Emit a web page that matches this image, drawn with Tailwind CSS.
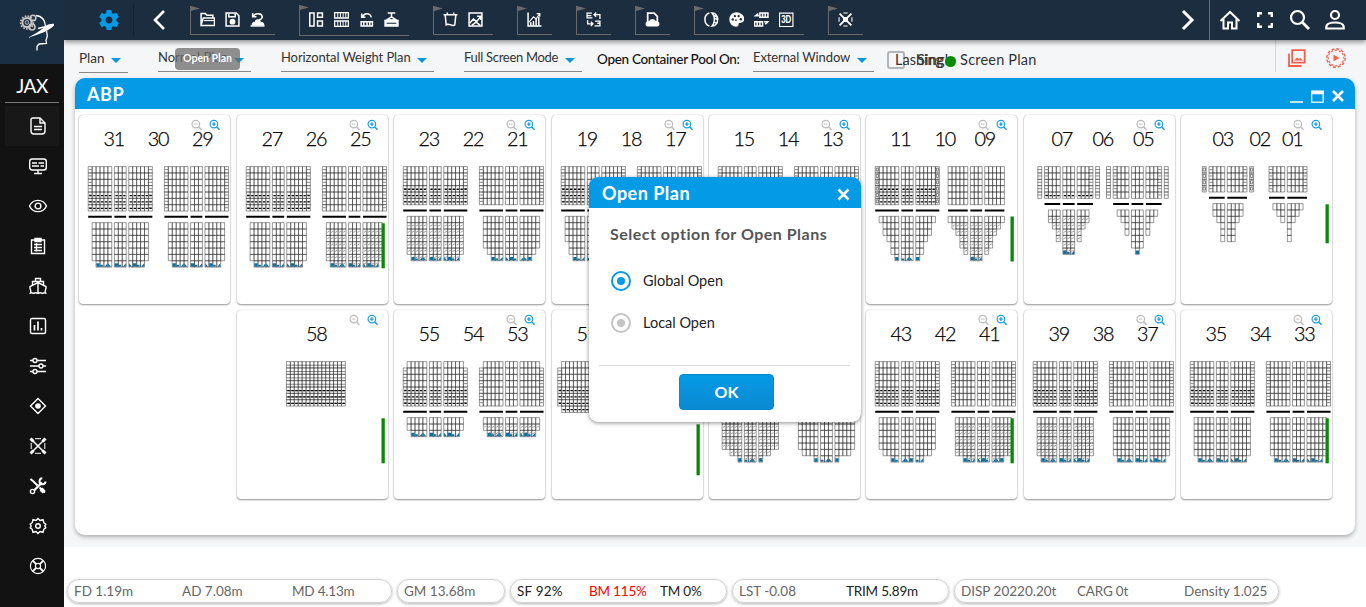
<!DOCTYPE html>
<html lang="en">
<head>
<meta charset="utf-8">
<title>Stowage planner</title>
<script src="https://cdn.jsdelivr.net/npm/@tailwindcss/browser@4"></script>
</head>
<body class="w-[1366px] h-[607px] overflow-hidden bg-white font-['Lato','Open_Sans',sans-serif] text-[14px] text-[#222]">
<div class="relative flex w-[1366px] h-[607px]">

  <!-- Sidebar -->
  <aside class="w-16 shrink-0 bg-[#121212] flex flex-col relative z-20">
    <div class="h-16 bg-[#1b2f43] flex items-center justify-center">
      <svg width="44" height="44" viewBox="0 0 44 44" fill="none" stroke="#fff">
        <g stroke="#c9c6c4"><circle cx="17" cy="12.500" r="4.600" stroke-width="2"/><circle cx="17" cy="12.500" r="6.400" stroke-width="1.600" stroke-dasharray="1.700 1.300"/><circle cx="17" cy="12.500" r="1.800"/><circle cx="23" cy="8" r="2.800" stroke-width="1.600"/><circle cx="22" cy="17" r="3" stroke-width="1.600"/></g>
        <path d="M26 5.500c5 .5 9 4 9.500 10.500M36.500 20.500l.8 5.500-1.300 4.500.5 3-7.500.5-2 2.500v4" stroke-width="1.300"/>
        <path d="M17 28C26 24 32 19 38 14.500L46 13C42 19.500 33 23.500 17 28Z" fill="#fff" stroke="none"/>
        <path d="M28 18.500l10-2.500" stroke-width="1.500"/>
      </svg>
    </div>
    <div class="mx-[5px] h-[39px] border-b border-[#777] flex items-center justify-center text-white text-[19px] pt-1.5 tracking-[-0.5px]">JAX</div>
    <nav class="flex flex-col pt-[3px]" id="nav"></nav>
  </aside>

  <div class="flex flex-col w-[1302px]">
    <!-- Application bar -->
    <header class="h-10 bg-[#1c2d3f] flex items-center relative z-10 shadow-[0_2px_5px_rgba(0,0,0,0.45)] text-white">
      <div class="w-[70px] h-8 border-r border-[#17222e] flex items-center pl-[35px]">
        <svg width="20" height="20" viewBox="2 2 20 20" fill="#059ae6"><path d="M19.430 12.980c.04-.32.07-.64.07-.98s-.03-.66-.07-.98l2.110-1.650c.19-.15.24-.42.12-.64l-2-3.460c-.12-.22-.39-.3-.61-.22l-2.490 1c-.52-.4-1.080-.73-1.690-.98l-.38-2.650C14.460 2.180 14.250 2 14 2h-4c-.25 0-.46.18-.49.42l-.38 2.650c-.61.25-1.170.59-1.690.98l-2.490-1c-.23-.09-.49 0-.61.22l-2 3.460c-.13.22-.07.49.12.64l2.110 1.650c-.04.32-.07.65-.07.98s.03.66.07.98l-2.110 1.650c-.19.15-.24.42-.12.64l2 3.460c.12.22.39.3.61.22l2.490-1c.52.4 1.080.73 1.690.98l.38 2.650c.03.24.24.42.49.42h4c.25 0 .46-.18.49-.42l.38-2.650c.61-.25 1.170-.59 1.690-.98l2.490 1c.23.09.49 0 .61-.22l2-3.460c.12-.22.07-.49-.12-.64l-2.110-1.650zM12 15.500c-1.930 0-3.500-1.570-3.500-3.500s1.570-3.500 3.500-3.500 3.500 1.570 3.500 3.500-1.570 3.500-3.500 3.500z"/></svg>
      </div>
      <svg class="ml-[18px] shrink-0" width="14" height="22" viewBox="0 0 14 22" fill="none" stroke="#fff" stroke-width="2.600"><path d="M12 2 3 11l9 9"/></svg>
      <div id="tools" class="flex gap-6 ml-6 w-[992px]"></div>
      <svg class="shrink-0 -ml-px" width="14" height="22" viewBox="0 0 14 22" fill="none" stroke="#fff" stroke-width="3"><path d="m2 2 9 9-9 9"/></svg>
      <div class="ml-[14px] h-10 border-l border-[#66717c] flex items-center gap-[11px] pl-[8px]">
        <svg width="24" height="24" viewBox="0 0 24 24" fill="none" stroke="#fff" stroke-width="2"><path d="M2.500 13 12 4l9.500 9M5.500 11v9.500h4.500v-6h4v6h4.500V11"/></svg>
        <svg width="24" height="24" viewBox="0 0 24 24" fill="none" stroke="#fff" stroke-width="2.400"><path d="M5.200 9V5.200H9M15 5.200h3.800V9M18.800 15v3.800H15M9 18.800H5.200V15"/></svg>
        <svg width="24" height="24" viewBox="0 0 24 24" fill="none" stroke="#fff" stroke-width="2.200"><circle cx="9.500" cy="9.500" r="6.500"/><path d="m14.500 14.500 6.500 6.500" stroke-width="2.800"/></svg>
        <svg width="24" height="24" viewBox="0 0 24 24" fill="none" stroke="#fff" stroke-width="2.200"><circle cx="12" cy="7" r="4"/><path d="M3.300 20.500v-1.500c0-2.800 4-4.500 8.700-4.500s8.700 1.700 8.700 4.500v1.500z"/></svg>
      </div>
    </header>

    <main class="h-[507px] bg-[#f5f6f8] flex flex-col">
      <!-- Option row -->
      <div class="h-[38px] flex items-start pl-[15px] pr-2 text-[#333] whitespace-nowrap">
        <div class="w-[49px] h-[33px] border-b border-[#888] flex items-center text-[13.5px] pt-[5px]">Plan<svg class="ml-auto mr-[7px] mt-[3px] shrink-0" width="10" height="5"><path d="M0 0h10L5 5z" fill="#0896de"/></svg></div>
        <div class="ml-[30px] w-[93px] h-8 border-b border-[#888] flex items-center pt-[5px] text-[13px]">Normal Plan<svg class="ml-auto mr-[7px] mt-[4px] shrink-0" width="10" height="5"><path d="M0 0h10L5 5z" fill="#0896de"/></svg></div>
        <div class="ml-[30px] w-[153px] h-8 border-b border-[#888] flex items-center pt-[5px] text-[13px] tracking-[-0.1px]">Horizontal Weight Plan<svg class="ml-auto mr-[7px] mt-[4px] shrink-0" width="10" height="5"><path d="M0 0h10L5 5z" fill="#0896de"/></svg></div>
        <div class="ml-[30px] w-[118px] h-8 border-b border-[#888] flex items-center pt-[5px] text-[13px] tracking-[-0.3px]">Full Screen Mode<svg class="ml-auto mr-[7px] mt-[4px] shrink-0" width="10" height="5"><path d="M0 0h10L5 5z" fill="#0896de"/></svg></div>
        <div class="ml-[15px] w-[156px] h-8 flex items-center pt-[6px] text-[13.5px] tracking-[-0.3px] font-medium text-[#111]">Open Container Pool On:</div>
        <div class="w-[121px] h-8 border-b border-[#888] flex items-center pt-[5px] text-[13px] tracking-[-0.1px]">External Window<svg class="ml-auto mr-[7px] mt-[4px] shrink-0" width="10" height="5"><path d="M0 0h10L5 5z" fill="#0896de"/></svg></div>
        <div class="ml-[13px] mt-[11px] w-[18px] h-[18px] border-2 border-[#b4b4b4] rounded-[3px]"></div>
        <div class="relative mt-[9px] -ml-[10px] w-[160px] h-6 text-[14.500px] leading-[22px]">Lashing<span class="absolute left-[22px] top-0 tracking-[0.2px]">Single Screen Plan</span><span class="absolute left-[50px] top-[7px] w-[11px] h-[11px] rounded-full bg-[#0a8a0a]"></span></div>
        <div class="ml-auto h-8 border-l border-[#d5d6d8] flex items-center gap-5 pl-3 pr-[12px] pt-1">
          <svg width="18" height="18" viewBox="0 0 18 18" fill="none" stroke="#f3604f" stroke-width="1.800"><path d="M4.200 1.200h12.500v12.500H4.200zM1 4.500V17h12.500"/><path d="m6 11.500 3-3 2 1.500 1.500-1 2.500 2.500z" fill="#f3604f" stroke="none"/></svg>
          <svg width="20" height="20" viewBox="0 0 20 20" fill="none" stroke="#f3604f" stroke-width="1.100"><circle cx="10" cy="10" r="7.800" stroke-dasharray="2.450 1.634" stroke-dashoffset="-2.450"/><circle cx="10" cy="10" r="9.200" stroke-width="1.400" stroke-dasharray="2.890 1.927"/><path d="m7.500 6.800 6 3.200-6 3.200z" fill="#f3604f" stroke="none"/></svg>
        </div>
      </div>

      <!-- Bay plan window -->
      <section class="ml-[11px] w-[1280px] h-[457px] bg-white rounded-[10px] overflow-hidden shadow-[0_2px_4px_rgba(0,0,0,0.3)]">
        <div class="h-[31px] bg-[#059ae6] flex items-center pl-3 text-white">
          <span class="text-[18px] font-bold tracking-[0.6px] pt-[2px]">ABP</span>
          <svg class="ml-auto mr-[9px] mt-1" width="56" height="16" viewBox="0 0 56 16" fill="none" stroke="#fff"><path d="M0 14h13" stroke-width="1.600"/><rect x="21.700" y="3.200" width="11.500" height="11" stroke-width="1.200"/><path d="M21 4.500h13" stroke-width="3.600"/><path d="m43 3 10 10M53 3 43 13" stroke-width="2.600"/></svg>
        </div>
        <div id="bays" class="mt-[5.500px] ml-[4.400px] grid grid-cols-[repeat(8,151px)] auto-rows-[189.500px] gap-x-[6.400px] gap-y-[5.500px]"></div>
      </section>
    </main>

    <!-- Stability figures -->
    <footer class="h-[60px] bg-white flex pt-[32px] pl-[3px] gap-[5px] text-[#666] text-[13.5px] whitespace-nowrap">
      <div class="w-[325px] h-6 rounded-full border border-[#d2d2d2] shadow-[0_1px_3px_rgba(0,0,0,0.3)] flex items-center pl-1.5 pt-px"><span class="w-[108px]">FD 1.19m</span><span class="w-[110px]">AD 7.08m</span><span class="tracking-[-0.2px]">MD 4.13m</span></div>
      <div class="w-[108px] h-6 rounded-full border border-[#d2d2d2] shadow-[0_1px_3px_rgba(0,0,0,0.3)] flex items-center pl-1.5 pt-px">GM 13.68m</div>
      <div class="w-[217px] h-6 rounded-full border border-[#d2d2d2] shadow-[0_1px_3px_rgba(0,0,0,0.3)] flex items-center pl-1.5 pt-px text-[#222]"><span class="w-[72px] tracking-[0.2px]">SF 92%</span><span class="w-[71px] text-[#f00] tracking-[-0.2px]">BM 115%</span><span class="tracking-[-0.2px]">TM 0%</span></div>
      <div class="w-[217px] h-6 rounded-full border border-[#d2d2d2] shadow-[0_1px_3px_rgba(0,0,0,0.3)] flex items-center pl-1.5 pt-px"><span class="w-[107px]">LST -0.08</span><span class="text-[#222] tracking-[-0.2px]">TRIM 5.89m</span></div>
      <div class="w-[325px] h-6 rounded-full border border-[#d2d2d2] shadow-[0_1px_3px_rgba(0,0,0,0.3)] flex items-center pl-1.5 pt-px"><span class="w-[116px]">DISP 20220.20t</span><span class="w-[107px] tracking-[-0.2px]">CARG 0t</span><span>Density 1.025</span></div>
    </footer>
  </div>

  <!-- Tooltip -->
  <div class="absolute z-30 left-[175px] top-[48px] w-[65px] h-[22px] rounded bg-[#6b6b6b]/75 text-white text-[10.500px] font-bold flex items-center justify-center whitespace-nowrap">Open Plan</div>

  <!-- Open plan dialog -->
  <div class="absolute z-30 left-[589px] top-[177px] w-[272px] h-[245px] rounded-[9px] bg-white overflow-hidden shadow-[0_1px_4px_rgba(0,0,0,0.45)] flex flex-col">
    <div class="h-[31px] bg-[#059ae6] flex items-center justify-between pl-[13px] pr-[11px] text-white text-[18px] font-bold tracking-[0.5px]"><span class="pt-[2px]">Open Plan</span><svg class="mt-1" width="13" height="13" viewBox="0 0 13 13" stroke="#fff" stroke-width="2.500"><path d="m1.500 1.500 10 10M11.500 1.500l-10 10"/></svg></div>
    <div class="pl-[21px] pt-[14px] text-[16px] leading-6 font-bold text-[#555] tracking-[0.5px] whitespace-nowrap">Select option for Open Plans</div>
    <div class="flex items-center gap-3 pl-[22px] mt-[25px] h-[20px] text-[14.500px]"><span class="w-5 h-5 rounded-full border-2 border-[#059ae6] flex items-center justify-center"><span class="w-2 h-2 rounded-full bg-[#059ae6]"></span></span><span>Global Open</span></div>
    <div class="flex items-center gap-3 pl-[22px] mt-[22px] h-[20px] text-[14.500px]"><span class="w-5 h-5 rounded-full border-2 border-[#c4c4c4] flex items-center justify-center"><span class="w-2 h-2 rounded-full bg-[#c4c4c4]"></span></span><span>Local Open</span></div>
    <div class="ml-[10px] mr-[11px] mt-[32px] border-t border-[#dadada] pt-2 pl-[4px] flex justify-center"><button class="w-[95px] h-9 rounded-[4px] border border-[#0789cd] bg-gradient-to-b from-[#059ae6] to-[#0a8ad0] text-white font-bold text-[16px]">OK</button></div>
  </div>
</div>

<script>
// Side navigation icons, 20px each
const nav = [
  '<path d="M5 2h7l5 5v8a3 3 0 0 1-3 3H6a3 3 0 0 1-3-3V4a2 2 0 0 1 2-2z"/><path d="M12 2v5h5M6 10.500h8M6 13.500h8"/>',
  '<rect x="1.700" y="3" width="16.600" height="11" rx="2.500"/><path d="M4 7h5M10.500 7H16M4 10h7M12.500 10H16M10 14v3.300M6 17.500h8"/>',
  '<path d="M1.500 10C5 2.500 15 2.500 18.500 10 15 17.500 5 17.500 1.500 10z"/><circle cx="10" cy="10" r="2.900"/>',
  '<path d="M3.500 4h13v13.500h-13z"/><path d="M7 2.500h6v3H7z" fill="#fff"/><path d="M6 8.500h8M6 11.500h8M6 14.500h8M8.500 7v8.500"/>',
  '<path d="M3 17c0-3-1.500-5-1-6.500L10 6.500l8 4c.5 1.500-1 3.500-1 6.500M4.500 9V5.500h11V9M7.500 5.500V2.500h5v3M10 6.500V17M1.500 17.500q2-1.500 4 0 2.200-1.500 4.500 0 2.300-1.500 4.500 0 2-1.500 4 0"/>',
  '<rect x="2.500" y="2.500" width="15" height="15" rx="1.500"/><path d="M6.500 14.500V9M10 14.500v-9M13.500 14.500V12" stroke-width="1.700"/>',
  '<path d="M2 4.500h3M9 4.500h9M2 10h9M15 10h3M2 15.500h3M9 15.500h9"/><circle cx="7" cy="4.500" r="2"/><circle cx="13" cy="10" r="2"/><circle cx="7" cy="15.500" r="2"/>',
  '<path d="m10 2.500 7.500 7.500-7.500 7.500L2.500 10z"/><circle cx="10" cy="10" r="2.800" fill="#fff" stroke="none"/>',
  '<path d="m4 4 12 12M16 4 4 16" stroke-width="1.500"/><path d="M7 2.700h6M7 17.300h6M3.200 7v6M16.800 7v6" stroke-width="1"/><path d="m2.500 2.500 3 3M17.500 2.500l-3 3M2.500 17.500l3-3M17.500 17.500l-3-3" stroke-width="3"/>',
  '<path d="m2.500 3 3 2.500 4 4M11.500 11.500l5.500 5" stroke-width="2"/><path d="m13 13 3 3" stroke-width="4"/><path d="m6 14.500 8-8" stroke-width="2.300"/><circle cx="4.500" cy="15.500" r="2.100"/><path d="M17.500 5.500a3 3 0 1 1-3.200-3.200" stroke-width="2"/>',
  '<path d="M10 2.500 12 4.500l3-.8.800 3 2 1.500-1 1.800 1 1.800-2 1.500-.8 3-3-.8-2 2-2-2-3 .8-.8-3-2-1.500 1-1.800-1-1.800 2-1.500.8-3 3 .8z"/><circle cx="10" cy="10" r="2.300"/>',
  '<circle cx="10" cy="10" r="7.600" stroke-width="1.100"/><circle cx="10" cy="10" r="2.600" stroke-width="1.100"/><path d="m4.700 4.700 3.500 3.500M15.300 4.700l-3.500 3.500M4.700 15.300l3.500-3.500M15.300 15.300l-3.500-3.500" stroke-width="1.900"/>'
];
document.getElementById('nav').innerHTML = nav.map((p, i) =>
  `<a class="mx-[5px] h-10 flex items-center justify-center pl-[12px] ${i ? '' : 'bg-[#181818]'}"><svg width="20" height="20" viewBox="0 0 20 20" fill="none" stroke="#fff" stroke-width="1.400">${p}</svg></a>`).join('');

// Toolbar groups, 15px icons
const cont = (x, y) => `<path d="M${x} ${y}h13v5h-13z"/><path d="M${x + 3} ${y}v5M${x + 5.500} ${y}v5M${x + 8} ${y}v5M${x + 10.500} ${y}v5" stroke-width=".9"/>`;
const tools = [
  ['<path d="M1.500 13V2h4l1.500 1.500h5.500V6M1.500 13l2-7h10.500v7z"/><path d="M4 8.500h10" stroke-width="1"/>',
   '<path d="M1.500 1.500h9.500l2.500 2.500v9.500h-12z"/><path d="M4 2v3h6V2"/><circle cx="7.500" cy="9.500" r="2" fill="#fff"/>',
   '<path d="M3.500 4.500c2-3.500 8-3 8.500.5 0 2-1.500 2.500-3 3M3 1.500V5h3.500" /><path d="M2 13h12c0-2.500-2-3.500-3.500-3.500-.5-3-5-3-5.500 0C3 9.500 2 11 2 13z" fill="#fff" stroke="none"/><path d="M1 13.500h13"/>'],
  ['<path d="M1.200 1.500h4v12h-4zM8.500 1.500h4.500v4H8.500zM8.500 9h4.500v4.500H8.500z"/>',
   cont(1, 1) + cont(1, 9),
   '<path d="M4 5c1-4 7-4 8 .5M3 2v3.500h3.500"/><path d="M2.500 9.500h10.500v4H2.500zM5 9v4M8 9v4M10.500 9v4"/>',
   '<path d="M4 1.500h7M7.500 2v3L3 8h9L7.500 5" /><path d="M1.500 8.500h12v5h-12z" fill="#fff"/><path d="M3 11h9" stroke="#1c2d3f" stroke-width="1"/>'],
  ['<path d="M1 3h13M2.500 3l1 9.500c2.500-2 5.500 2 8 0l1-9.500M4.500 1v2M10.500 1v2"/>',
   '<path d="M1.500 1.500h12v12h-12z"/><path d="m2 11 3.500-4 3 2.500 4-5M9 4.500h3.500V8M4 13l4-3 4 3"/>'],
  ['<path d="M1.500 1v12.500H14M4 13v-3M6.500 13V9M9 13V7M11.500 13V5"/><path d="m2.500 10 4-5 2.500 2L12 2.500M9.500 2h3v3" stroke-width="1"/>'],
  ['<g stroke-width="1.200"><path d="M6 1.500H1.500v4.500h5M1.500 3.800h4M8 3h5.500v4M10 1 8 3l2 2M9 9h4.500v4.500H8.500M7 11.500H2V8M5 9.500l2 2-2 2M11 11h3"/></g>'],
  ['<path d="M3 12V1.500h6l3 3V12" stroke-width="1.600"/><path d="M1 12c0-2 1.500-3 3.500-3 .8-2.500 5-2.500 6 0 2.500 0 3.500 1.500 3.500 3 0 1.500-1 2-2 2H3c-1.300 0-2-1-2-2z" fill="#fff" stroke="none"/>'],
  ['<path d="M5.500 1.500C0 3 0 12 5.500 13.500" /><path d="M8 1.500c7 0 7 12 0 12 3-3 3-9 0-12z"/><path d="m10 3.500 3 2M10.500 6.500l3 1M10 10l3 1"/>',
   '<path d="M7.500 1.500c-8 0-8 12 0 12 2 0 1-2 1.500-3s5 .5 5-3.500c0-3-3-5.500-6.500-5.500z" fill="#fff"/><g fill="#1c2d3f" stroke="none"><circle cx="4" cy="7.500" r="1.100"/><circle cx="6" cy="4.300" r="1.100"/><circle cx="9.500" cy="4.300" r="1.100"/><circle cx="11.500" cy="7.300" r="1.100"/><circle cx="7" cy="8" r=".8"/></g>',
   '<path d="M6 1.500h7.500v4H6zM8.500 1.500v4M11 1.500v4M1 9.500h7.500v4H1zM3.500 9.500v4M6 9.500v4M4.500 2 2 4h3M10 9.500h3.500L11 12"/>',
   '<path d="M1 1.500h12.500v12.500H1z" stroke-width="1.100"/><text x="7.300" y="11.200" text-anchor="middle" font-size="9.500" font-weight="bold" font-family="Liberation Sans" fill="#fff" stroke="none" textLength="9.500" lengthAdjust="spacingAndGlyphs">3D</text>'],
  ['<path d="m2 2 11 11M13 2 2 13" stroke-width="1.700"/><path d="M5.500 1.500h4M5.500 13.500h4M1.500 5.500v4M13.500 5.500v4" stroke-width="1"/><circle cx="7.500" cy="7.500" r="2.400" fill="#fff" stroke="none"/>']
];
document.getElementById('tools').innerHTML = tools.map((g, i) =>
  `<div class="relative flex items-center gap-[10px] pl-[9px] pr-[10px] border-l border-b border-[#6a6a6a] ${i === 1 ? 'h-[31px]' : 'h-[29px] mt-px'}"><svg class="absolute left-0 top-0" width="9" height="5"><path d="M0 0 9 2.500 0 5z" fill="#6a6a6a"/></svg>` +
  g.map(p => `<svg width="15" height="15" viewBox="0.5 0.5 14 14" fill="none" stroke="#fff" stroke-width="1.400">${p}</svg>`).join('') + '</div>').join('');

// Bay profiles: each block has an x origin, column groups, deck rows and hold row ranges
const W = 3.93, H = 6.35, GAP = 2.6, TOP = 52.3;
const rep = (r, n) => Array(n).fill(r);
const mir = (starts, last) => starts.map(s => [s, last - s]);
const F = [6, 3, 6];
const std = [...rep([1, 13], 6), [2, 12]];
const L = 9.2, R = 85.4, T3 = [35, 79.2, 123.5];
const bay = (names, left, right, green, tx = T3) => ({ names, blocks: [left, right].filter(Boolean), green, tx });
const blk = (x, rows, hold, o = {}) => ({ x, g: F, rows, hold, ...o });
const s23 = [...rep([1, 13], 5), [2, 12], [3, 11]];
const s19 = [...rep([1, 13], 4), [2, 12], [2, 12], [3, 11]];
const bays = [
  bay(['31', '30', '29'], blk(L, 7, std, { dots: 3 }), blk(R, 7, std)),
  bay(['27', '26', '25'], blk(L, 7, std, { dots: 3 }), blk(R, 7, std, { sh: 1 }), [109, 45]),
  bay(['23', '22', '21'], blk(L, 6, [...rep([1, 13], 6), [2, 12]], { dots: 3, sh: 1 }), blk(R, 6, s23)),
  bay(['19', '18', '17'], blk(L, 6, s19, { dots: 3 }), blk(R, 6, s19)),
  bay(['15', '14', '13'], blk(L, 6, s19, { dots: 3 }), blk(R, 6, s19)),
  bay(['11', '10', '09'], blk(L, 6, mir([1, 2, 2, 3, 4, 4, 5], 14), { dots: 3, box: 1 }), blk(82.100, 6, mir([0, 1, 2, 3, 3, 4, 5], 12), { g: [5, 3, 5], sh: 1, plain: 1 }), [102.200, 45], [34.5, 79, 119]),
  bay(['07', '06', '05'], blk(20.500, 5, mir([1, 1, 2, 3, 3, 4, 4], 10), { g: [4, 3, 4], wing: 1, dots: 1, sh: 1 }), blk(89.200, 5, mir([1, 2, 3, 3, 4, 4, 5], 10), { g: [4, 3, 4], wing: 1 }), null, [38, 79, 119.5]),
  bay(['03', '02', '01'], blk(28, 4, [[1, 7], [1, 7], [2, 6], [3, 5], [3, 5], [3, 5]], { g: [4, 5], wing: 2, nb: 1 }), blk(88, 4, [[1, 7], [2, 6], [3, 5], [4, 4], [4, 4], [4, 4]], { g: [4, 5], nb: 1 }), [90, 39], [42, 79, 111.500]),
  null,
  bay(['58'], blk(49.400, 7, [], { g: [15], dots: 3, half: 1, plain: 1 }), null, [109, 45], [79.400]),
  bay(['55', '54', '53'], blk(L, 7, [[1, 13], [1, 13], [2, 12]], { dots: 3, cut: 1 }), blk(R, 7, [[1, 13], [1, 13], [2, 12]], { cut: 1, sh: 1 })),
  bay(['51', '50', '49'], blk(5.700, 8, [], { g: [19], dots: 4, cut: 1, cutb: 1 }), null, [115, 51]),
  bay(['47', '46', '45'], blk(L, 7, [...rep([1, 13], 5), [3, 11], [5, 9]], { sh: 1 }), blk(R, 7, [...rep([1, 13], 5), [2, 12], [5, 9]])),
  bay(['43', '42', '41'], blk(L, 7, [...rep([1, 13], 5), [2, 12], [4, 10]], { dots: 3 }), blk(R, 7, [...rep([1, 13], 6), [3, 11]], { sh: 1 }), [109, 45]),
  bay(['39', '38', '37'], blk(L, 7, std, { dots: 3, sh: 1 }), blk(R, 7, std)),
  bay(['35', '34', '33'], blk(L, 7, std, { dots: 3 }), blk(R, 7, std), [109, 45])
];
function drawBlock(b) {
  const xs = []; let x = b.x, cells = '', ticks = '', dots = '', marks = '', blue = '', hatch = '';
  const deckBottom = TOP + b.rows * H;
  b.g.forEach(n => {
    if (b.hold.length) hatch += `<path d="M${x} ${deckBottom + 5.700}h${n * W}" stroke="#000" stroke-width="2"/>`;
    for (let i = 0; i < n; i++) { xs.push(x); x += W; }
    x += GAP;
  });
  const n = xs.length;
  const cell = (cx, y) => { cells += `M${cx.toFixed(2)} ${y.toFixed(2)}h${W}v${H}h-${W}z`; };
  for (let r = 0; r < b.rows; r++) {
    const c = (b.cut && r === 0) || (b.cutb && r === b.rows - 1) ? 1 : 0;
    for (let i = c; i < n - c; i++) {
      const y = TOP + r * H; cell(xs[i], y);
      if (!b.plain && (i === 0 || i === n - 1)) ticks += b.box ? `M${xs[i] + 1} ${y + 1.500}h2v3h-2z` : `M${xs[i] + .5} ${y + 3}h3`;
      if (b.half) ticks += `M${xs[i]} ${y + 3.600}h${W}`;
      if (b.dots && r >= b.rows - b.dots && !(b.box && (i === 0 || i === n - 1))) dots += `M${xs[i] + 1} ${y + 3.600}h2.300`;
    }
  }
  if (b.wing) [xs[0] - 6.700, xs[n - 1] + W + 2.700].forEach(wx => {
    for (let r = 0; r < b.rows; r++) { const y = TOP + r * H; cell(wx, y); ticks += b.wing === 2 ? `M${wx + .8} ${y + 1.500}h2.300v3h-2.300z` : `M${wx} ${y + 3}h${W}`; }
  });
  const hy = deckBottom + 11.600;
  b.hold.forEach(([s, e], r) => {
    const y = hy + r * H;
    for (let i = s; i <= e; i++) {
      cell(xs[i], y);
      if (b.sh && r > 0) marks += `M${xs[i] + .8} ${y + 3.400}l2.400-1.200`;
      if (r === b.hold.length - 1 && !b.nb) {
        const k = (i * 7 + s) % 4;
        blue += k === 0 ? `M${xs[i] + .3} ${y + 2.500}h3.300v3.400h-3.300z` : k === 1 ? `M${xs[i] + .3} ${y + 2.500}l3 3.400h-3z` : k === 2 ? `M${xs[i] + .6} ${y + 5.900}h3v-3.400z` : `M${xs[i] + .3} ${y + 4}h2.600v1.900h-2.600z`;
      }
    }
  });
  return `<path d="${cells}" fill="none" stroke="#222" stroke-opacity=".62" stroke-width=".75"/><path d="${ticks}" fill="none" stroke="#333" stroke-width=".6"/><path d="${dots}" stroke="#000" stroke-width="1.300"/><path d="${marks}" stroke="#888" stroke-width=".8"/><path d="${blue}" fill="#10709c"/>${hatch}`;
}
const lens = (x, c, plus) => `<g fill="none" stroke="${c}" stroke-width="1.200"><circle cx="${x}" cy="9.800" r="3.800"/><path d="m${x + 2.700} 12.500 3 3" stroke-width="1.500"/><path d="M${x - 1.800} 9.800h3.600${plus ? `M${x} 8v3.600` : ''}" stroke-width="${plus ? 1.400 : .9}"/></g>`;
document.getElementById('bays').innerHTML = bays.map((b, i) => b === null ? '<div></div>' :
  `<div class="bg-white rounded-[4px] shadow-[0_1px_2px_rgba(0,0,0,0.4),0_0_1px_rgba(0,0,0,0.35)] overflow-hidden"><svg width="151" height="189.5" viewBox="0 0.7 151 189.5">` +
  lens(116.800, '#bbb', 0) + lens(134.900, '#1b9fe4', 1) +
  b.names.map((t, k) => `<text x="${b.tx[k] + .4}" y="31.900" text-anchor="middle" font-size="19.800" font-weight="300" fill="#000" stroke="#000" stroke-width=".25" textLength="21.800">${t}</text>`).join('') +
  b.blocks.map(drawBlock).join('') +
  (b.green ? `<rect x="144.500" y="${b.green[0]}" width="3.300" height="${b.green[1]}" fill="#078a07"/>` : '') + '</svg></div>').join('');
</script>
</body>
</html>
